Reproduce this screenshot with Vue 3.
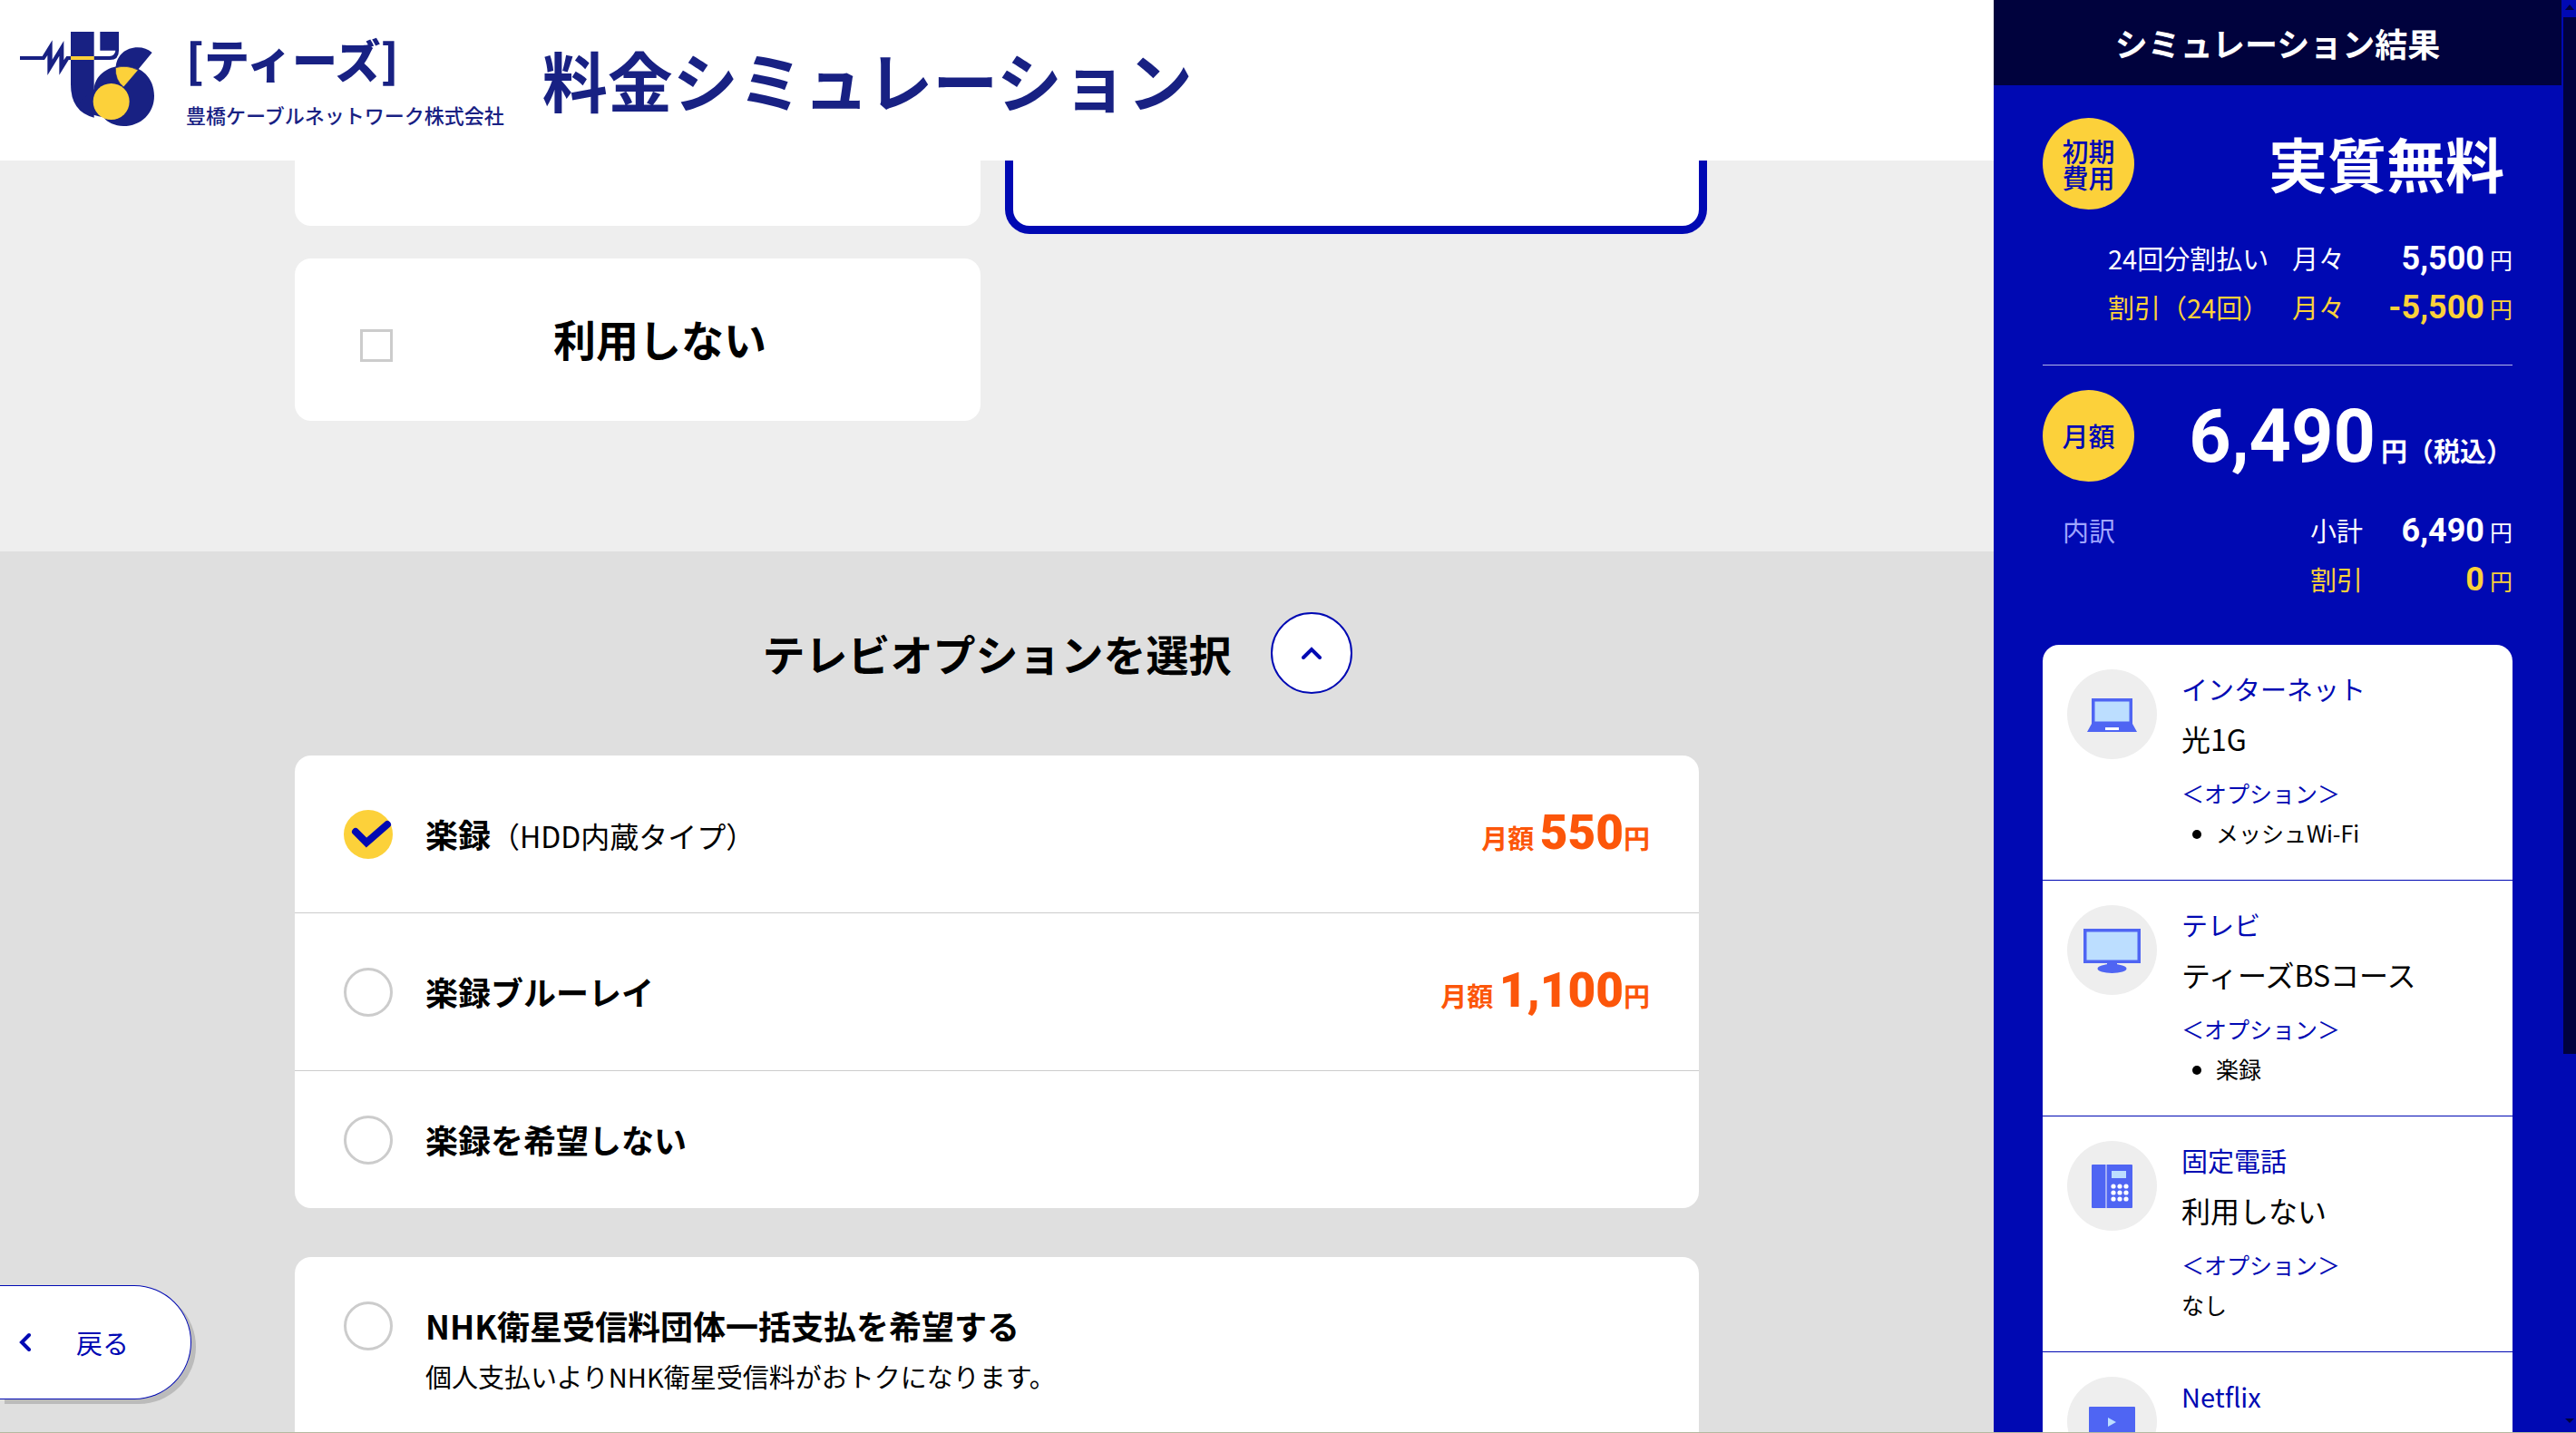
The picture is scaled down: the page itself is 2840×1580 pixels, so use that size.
<script setup>
import { ref } from 'vue'

const recorder = ref('hdd')
const nhk = ref(false)
const noUse = ref(false)

const recorders = [
  { id: 'hdd', name: '楽録', note: '（HDD内蔵タイプ）', price: '550' },
  { id: 'blu', name: '楽録ブルーレイ', price: '1,100' },
  { id: 'none', name: '楽録を希望しない' }
]

const services = [
  { icon: 'laptop', kind: 'インターネット', plan: '光1G', options: ['メッシュWi-Fi'] },
  { icon: 'tv', kind: 'テレビ', plan: 'ティーズBSコース', options: ['楽録'] },
  { icon: 'phone', kind: '固定電話', plan: '利用しない', options: [] },
  { icon: 'video', kind: 'Netflix' }
]

const dots = [0, 1, 2].flatMap((r) => [0, 1, 2].map((c) => ({ x: 51 + c * 7, y: 50 + r * 7 })))
</script>

<template>
  <div class="page">
    <div class="content">
      <header class="site-header">
        <a href="#" class="brand">
          <svg class="mark" viewBox="0 0 480 360" aria-hidden="true">
            <g fill="#182183">
              <path d="M204 30H281V314Q204 295 204 205Z" />
              <path d="M281 220C283 180 318 145 378 142C440 142 480 185 480 242C480 300 436 342 378 342C350 342 325 330 312 313C270 306 240 290 225 270Z" />
              <path d="M473 99L379 213C360 198 350 172 353 147C356 108 386 82 425 82C444 82 460 88 473 99Z" />
              <path d="M301 30H363V92Q363 123 334 123H281V111H332Q350 110 352 92H301Z" />
              <path d="M36 111H110L143 58V122L181 60V124L190 111H204V123H197L166 173V110L127 174V108L117 123H36Z" />
            </g>
            <rect x="204" y="111" width="77" height="12" fill="#fcd13a" />
            <path d="M352 149Q390 138 427 157L379 213Q350 190 352 149Z" fill="#fcd13a" stroke="#182183" stroke-width="2" />
            <circle cx="338" cy="261" r="60" fill="#fcd13a" />
          </svg>
          <span class="brand-text">
            <span class="brand-name">[ティーズ]</span>
            <span class="brand-company">豊橋ケーブルネットワーク株式会社</span>
          </span>
        </a>
        <h1>料金シミュレーション</h1>
      </header>

      <section class="courses">
        <div class="course-grid">
          <div class="course cut"></div>
          <div class="course cut chosen"></div>
          <label class="course">
            <input v-model="noUse" type="checkbox" class="tick" />
            <span>利用しない</span>
          </label>
        </div>
      </section>

      <section class="options">
        <div class="inner">
          <div class="options-head">
            <h2>テレビオプションを選択</h2>
            <button type="button" class="toggle" aria-label="閉じる">
              <svg width="22" height="14" viewBox="0 0 22 14"><path d="M2 12L11 3L20 12" fill="none" stroke="#0009b3" stroke-width="4" stroke-linecap="round" /></svg>
            </button>
          </div>

          <div class="list">
            <label v-for="r in recorders" :key="r.id" class="row" :class="{ short: !r.price }">
              <span class="pick">
                <input v-model="recorder" type="radio" name="recorder" :value="r.id" />
                <svg v-if="recorder === r.id" viewBox="0 0 54 54"><path d="M13 24L25 36L48 16" fill="none" stroke="#0009b3" stroke-width="8" stroke-linecap="round" /></svg>
              </span>
              <span class="name"><b>{{ r.name }}</b><span v-if="r.note" class="note">{{ r.note }}</span></span>
              <span v-if="r.price" class="price">月額 <strong>{{ r.price }}</strong>円</span>
            </label>
          </div>

          <div class="list">
            <label class="row top">
              <span class="pick"><input v-model="nhk" type="checkbox" name="nhk" /></span>
              <span class="name">
                <b>NHK衛星受信料団体一括支払を希望する</b>
                <span class="desc">個人支払いよりNHK衛星受信料がおトクになります。</span>
              </span>
            </label>
          </div>
        </div>
      </section>
    </div>

    <aside class="result">
      <h2 class="result-title">シミュレーション結果</h2>
      <div class="result-body">
        <div class="total">
          <span class="badge">初期<br />費用</span>
          <strong class="free">実質無料</strong>
        </div>
        <dl class="lines">
          <div><dt>24回分割払い</dt><dd class="per">月々</dd><dd class="sum"><b>5,500</b>円</dd></div>
          <div class="off"><dt>割引（24回）</dt><dd class="per">月々</dd><dd class="sum"><b>-5,500</b>円</dd></div>
        </dl>
        <hr />
        <div class="total">
          <span class="badge">月額</span>
          <strong class="monthly"><span class="big">6,490</span><span>円（税込）</span></strong>
        </div>
        <div class="detail">
          <span class="detail-head">内訳</span>
          <dl class="lines">
            <div><dt>小計</dt><dd class="sum"><b>6,490</b>円</dd></div>
            <div class="off"><dt>割引</dt><dd class="sum"><b>0</b>円</dd></div>
          </dl>
        </div>

        <div class="services">
          <div v-for="s in services" :key="s.kind" class="service">
            <svg class="service-icon" viewBox="0 0 99 99" aria-hidden="true">
              <circle cx="49.5" cy="49.5" r="49.5" fill="#eee" />
              <g v-if="s.icon === 'laptop'">
                <path d="M27 32H72V60L77 69H22L27 60Z" fill="#4f65f3" />
                <rect x="30.5" y="35.5" width="38" height="22" fill="#bcdeff" />
                <rect x="42" y="64" width="15" height="3" fill="#fff" />
              </g>
              <g v-else-if="s.icon === 'tv'">
                <path d="M18 26H81V64H55V67H44V64H18Z" fill="#4f65f3" />
                <rect x="21.5" y="29.5" width="56" height="31" fill="#bcdeff" />
                <ellipse cx="49.5" cy="70" rx="16" ry="5" fill="#4f65f3" />
              </g>
              <g v-else-if="s.icon === 'phone'">
                <rect x="27" y="26" width="45" height="48" rx="1" fill="#4f65f3" />
                <rect x="42" y="26" width="2" height="48" fill="#a3adf5" />
                <rect x="49" y="33" width="16" height="8" fill="#bcdeff" />
                <circle v-for="d in dots" :key="d.x + '-' + d.y" :cx="d.x" :cy="d.y" r="2.6" fill="#fff" />
              </g>
              <g v-else>
                <rect x="24" y="33" width="51" height="36" rx="1" fill="#4f65f3" />
                <path d="M45 45L54 50L45 55Z" fill="#bcdeff" />
              </g>
            </svg>
            <div class="service-text">
              <p class="kind">{{ s.kind }}</p>
              <template v-if="s.plan">
                <p class="plan">{{ s.plan }}</p>
                <p class="opt">＜オプション＞</p>
                <ul v-if="s.options.length"><li v-for="o in s.options" :key="o">{{ o }}</li></ul>
                <p v-else class="nothing">なし</p>
              </template>
            </div>
          </div>
        </div>
      </div>
    </aside>

    <div class="scrollbar" aria-hidden="true">
      <svg width="16" height="19" viewBox="0 0 16 19"><path d="M4 11L9 5L14 11Z" fill="#00023d" /></svg>
      <div class="track"><div class="thumb"></div></div>
      <svg width="16" height="19" viewBox="0 0 16 19"><path d="M4 4L9 9L14 4Z" fill="#00023d" /></svg>
    </div>

    <button type="button" class="back">
      <svg width="14" height="22" viewBox="0 0 14 22"><path d="M12 3L4 11L12 19" fill="none" stroke="#0009b3" stroke-width="4" stroke-linecap="round" /></svg>
      戻る
    </button>
  </div>
</template>

<style>
body {
  margin: 0;
  overflow: hidden;
}
</style>

<style scoped>
* {
  box-sizing: border-box;
  margin: 0;
  padding: 0;
}
.page {
  position: relative;
  display: flex;
  height: 100vh;
  overflow: hidden;
  border-bottom: 1px solid #b5b9a0;
  font-family: 'Noto Sans CJK JP', sans-serif;
  font-size: 29px;
  line-height: 1;
  color: #000;
}
.content {
  flex: 1;
  min-width: 0;
  display: flex;
  flex-direction: column;
}
.site-header {
  display: flex;
  align-items: center;
  gap: 42px;
  height: 177px;
  flex-shrink: 0;
  padding: 0 0 7px 10px;
  background: #fff;
  color: #182183;
}
.brand {
  display: flex;
  align-items: center;
  gap: 35px;
  color: inherit;
  text-decoration: none;
}
.mark {
  width: 160px;
  height: 120px;
}
.brand-text {
  display: flex;
  flex-direction: column;
  gap: 26px;
  padding-top: 5px;
}
.brand-name {
  font-size: 50px;
  font-weight: 900;
}
.brand-company {
  font-size: 22px;
  font-weight: 500;
}
h1 {
  padding-top: 3px;
  font-size: 72px;
  font-weight: 700;
}
.courses {
  flex-shrink: 0;
  padding-bottom: 144px;
  background: #eee;
}
.course-grid {
  display: grid;
  grid-template-columns: 1fr 1fr;
  gap: 36px;
  max-width: 1548px;
  margin: 0 auto;
}
.course {
  display: flex;
  align-items: center;
  height: 179px;
  padding: 0 59px 4px 72px;
  border-radius: 18px;
  background: #fff;
  font-size: 47px;
  font-weight: 700;
}
.course span {
  flex: 1;
  text-align: center;
}
.cut {
  height: 72px;
  border-radius: 0 0 18px 18px;
}
.chosen {
  box-shadow: 0 0 0 9px #0009b3;
  clip-path: inset(0 -9px -9px -9px);
}
.tick {
  appearance: none;
  width: 36px;
  height: 36px;
  margin-top: 16px;
  border: 3px solid #ccc;
  background: #fff;
}
.options {
  flex: 1;
  min-height: 0;
  padding-top: 67px;
  background: #dfdfdf;
}
.inner {
  max-width: 1548px;
  margin: 0 auto;
}
.options-head {
  display: grid;
  grid-template-columns: 1fr auto 1fr;
  align-items: center;
  gap: 43px;
  margin-bottom: 68px;
}
.options-head h2 {
  grid-column: 2;
  padding-bottom: 1px;
  font-size: 47px;
  font-weight: 700;
}
.toggle {
  display: grid;
  place-items: center;
  width: 90px;
  height: 90px;
  border: 2px solid #0009b3;
  border-radius: 50%;
  background: #fff;
}
.list {
  margin-bottom: 54px;
  border-radius: 18px;
  background: #fff;
}
.row {
  display: flex;
  align-items: center;
  gap: 36px;
  height: 174px;
  padding: 0 54px;
  border-bottom: 1px solid #ccc;
}
.row:last-child {
  border-bottom: 0;
}
.row.short {
  height: 151px;
}
.row.top {
  align-items: flex-start;
  height: 240px;
  padding-top: 49px;
}
.pick {
  position: relative;
  width: 54px;
  height: 54px;
}
.pick input {
  display: block;
  appearance: none;
  width: 54px;
  height: 54px;
  border: 3px solid #ccc;
  border-radius: 50%;
  background: #fff;
}
.pick input:checked {
  border-color: #fcd13a;
  background: #fcd13a;
}
.pick svg {
  position: absolute;
  inset: 0;
  pointer-events: none;
}
.name,
.price {
  padding-bottom: 2px;
}
.name {
  flex: 1;
}
.name b {
  font-size: 36px;
  line-height: 52px;
}
.note {
  font-size: 32px;
}
.desc {
  display: block;
  line-height: 60px;
}
.price {
  color: #fc560a;
  font-weight: 700;
}
.price strong {
  font-family: Roboto, sans-serif;
  font-size: 53px;
}
.result {
  width: 626px;
  overflow: hidden;
  background: #0009b3;
  color: #fff;
}
.result-title {
  font-size: 36px;
  line-height: 94px;
  font-weight: 700;
  text-align: center;
  background: #00023d;
}
.result-body {
  padding: 36px 54px;
}
.total {
  display: flex;
  align-items: center;
  justify-content: space-between;
}
.badge {
  display: grid;
  place-items: center;
  place-content: center;
  width: 101px;
  height: 101px;
  border-radius: 50%;
  background: #fcd13a;
  color: #0009b3;
  font-weight: 500;
  text-align: center;
}
.free {
  padding: 0 9px 2px 0;
  font-size: 65px;
}
.monthly {
  display: flex;
  align-items: baseline;
  gap: 6px;
  padding-top: 2px;
}
.big {
  font-family: Roboto, sans-serif;
  font-size: 81px;
}
.lines > div {
  display: flex;
  justify-content: flex-end;
  align-items: baseline;
  height: 54px;
  line-height: 54px;
}
.result-body > .lines {
  padding: 26px 0 37px;
}
.result-body > .lines dt {
  width: 203px;
}
.sum {
  width: 185px;
  font-size: 25px;
  text-align: right;
}
.detail .sum {
  width: 165px;
}
.sum b {
  margin-right: 6px;
  font-family: Roboto, sans-serif;
  font-size: 36px;
}
.off {
  color: #fcd13a;
}
hr {
  height: 1px;
  margin-bottom: 27px;
  border: 0;
  background: #b3b5e8;
}
.detail {
  display: flex;
  justify-content: space-between;
  padding: 26px 0 46px 22px;
}
.detail-head {
  line-height: 54px;
  color: #9fa5ff;
}
.services {
  border-radius: 18px;
  background: #fff;
  color: #000;
}
.service {
  display: flex;
  gap: 27px;
  padding: 27px 27px 30px;
}
.service + .service {
  border-top: 1px solid #0009b3;
}
.service-icon {
  width: 99px;
  height: 99px;
}
.kind {
  line-height: 42px;
  color: #0009b3;
}
.plan {
  margin: 7px 0 11px;
  font-size: 32px;
  line-height: 54px;
}
.opt,
.nothing,
.service-text ul {
  font-size: 25px;
  line-height: 44px;
}
.opt {
  color: #0009b3;
}
.service-text ul {
  padding-left: 38px;
}
.scrollbar {
  display: flex;
  flex-direction: column;
  width: 16px;
  background: #0009b3;
}
.track {
  flex: 1;
  padding-left: 2px;
}
.thumb {
  height: 74.2%;
  background: #00023d;
}
.back {
  position: absolute;
  left: 0;
  bottom: 36px;
  display: flex;
  align-items: center;
  gap: 50px;
  width: 211px;
  height: 126px;
  padding-left: 20px;
  border: 1px solid #0009b3;
  border-left: 0;
  border-radius: 0 63px 63px 0;
  background: #fff;
  box-shadow: 5px 5px 0 #bbb;
  color: #0009b3;
  font: inherit;
}
</style>
